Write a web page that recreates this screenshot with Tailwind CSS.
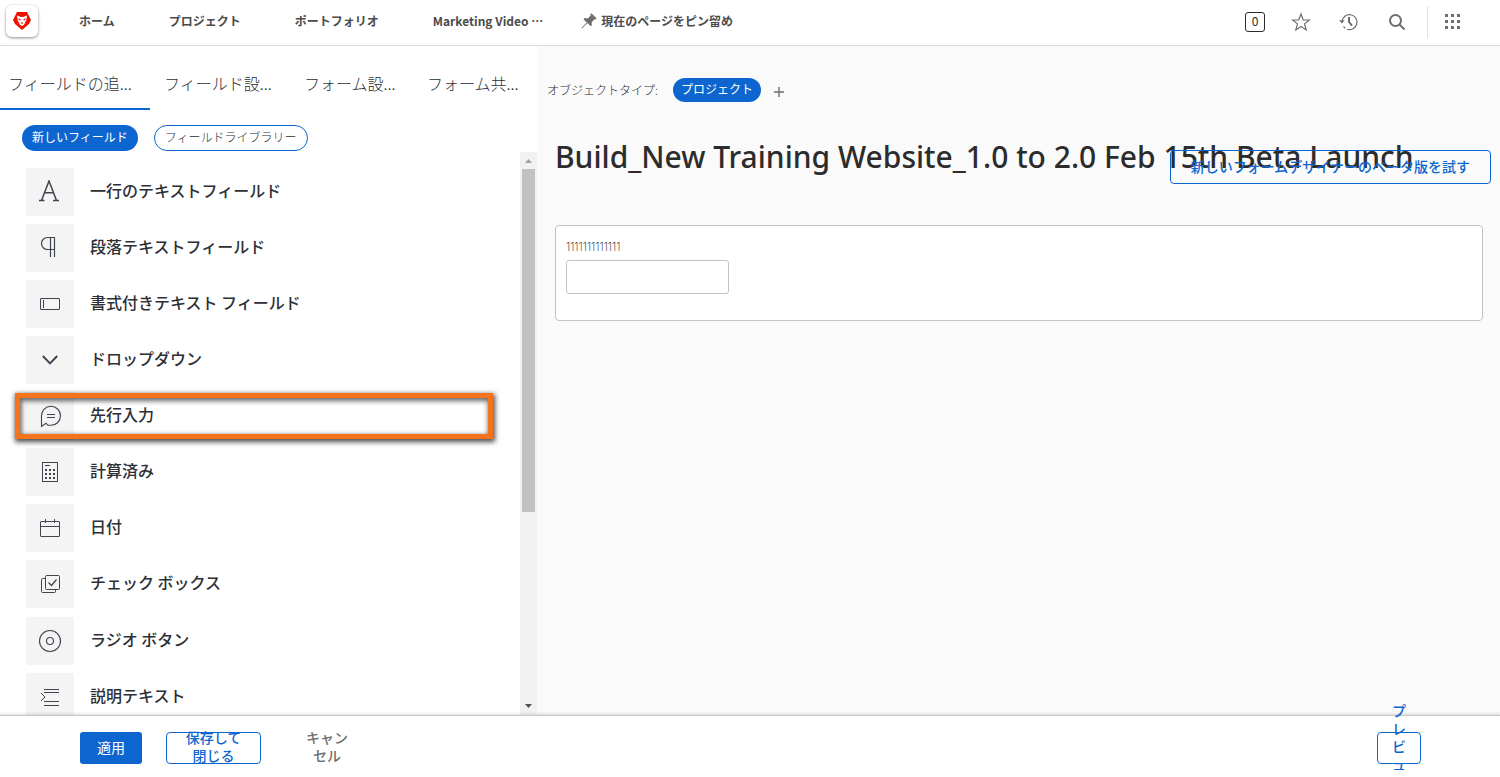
<!DOCTYPE html>
<html lang="ja">
<head>
<meta charset="utf-8">
<title>フォームデザイナー</title>
<script src="https://cdn.jsdelivr.net/npm/@tailwindcss/browser@4"></script>
</head>
<body class="bg-white">
<div class="flex h-screen flex-col pb-[7px] font-['Noto_Sans_CJK_JP','Noto_Sans',sans-serif] text-[#2c2f36]">
<div class="flex min-h-0 flex-1 flex-col overflow-hidden">

  <header class="flex h-[46px] shrink-0 items-center border-b border-[#dcdcdc] bg-white pr-10 pl-[6px] text-xs font-bold text-[#4b4b4b]">
    <a href="#" aria-label="Workfront" class="mb-[3px] flex size-8 items-center justify-center rounded-md bg-white shadow-[0_1px_3px_rgba(0,0,0,0.45)]">
      <svg class="size-[18px]" viewBox="0 0 18 18"><path fill="#eb1000" d="M4 0h10l4 8-2 4-7 6-7-6-2-4z"/><path fill="#fff" d="M4 3.500 8 5h2l4-1.500-.5 3.500-.7 4-2 2L9 14l-1.800-1-2-2-.7-4z"/><path fill="#eb1000" d="m5.500 6.200 2.500 1.500-1 .8-1.500-.8zM12.500 6.200 10 7.700l1 .8 1.500-.8zM7.700 10.500h2.600L9.600 11.700H8.400zM5.200 9l1.600 3.500-.5.5-1.300-2zM12.800 9l-1.600 3.500.5.500 1.300-2z"/></svg>
    </a>
    <nav class="ml-[41px] flex items-center gap-[54px] pb-[3px]">
      <a href="#">ホーム</a>
      <a href="#">プロジェクト</a>
      <a href="#">ポートフォリオ</a>
      <a href="#">Marketing Video …</a>
    </nav>
    <button class="ml-[38px] flex items-center gap-1 pb-1">
      <svg class="size-4" viewBox="0 0 16 16" fill="#6e6e6e"><path d="M10.500.300 15.700 5.500l-1 .9-1.100-.2-3 3 .3 2.800-1.200 1.200-3.300-3.300L1 15.600.4 15l5.300-5.600L2.500 6.200 3.700 5l3 .4 3-3-.2-1.100z"/></svg>
      <span>現在のページをピン留め</span>
    </button>
    <div class="ml-auto flex items-center pb-[2px] text-[#6e6e6e]">
      <button class="flex size-5 items-center justify-center rounded-[3px] border border-[#2c2c2c] pb-px text-xs font-normal text-[#2c2c2c]">0</button>
      <button aria-label="お気に入り" class="ml-[26px]"><svg class="size-5" viewBox="0 0 20 20" fill="none" stroke="currentColor" stroke-width="1.200"><path d="m10 2 2.200 5.800 6.200.2-4.900 3.900 1.700 6L10 14.500l-5.200 3.400 1.700-6L1.600 8l6.200-.2z"/></svg></button>
      <button aria-label="履歴" class="ml-7"><svg class="size-5" viewBox="0 0 20 20" fill="none" stroke="currentColor"><path stroke-width="1.200" d="M3 9.500A7.500 7.500 0 1 1 8 17.200M4.500 14.500l1.800 1.800"/><path fill="currentColor" stroke="none" d="M.2 8.200h5.400L2.900 11.500z"/><path stroke-width="2" d="M10 5v5l3 3.600"/></svg></button>
      <button aria-label="検索" class="ml-7"><svg class="size-5" viewBox="0 0 20 20" fill="none" stroke="currentColor" stroke-width="2"><circle cx="8.500" cy="8.500" r="5.500"/><path d="m12.500 12.500 5 5"/></svg></button>
      <span class="ml-5 h-8 w-px bg-[#e4e4e4]"></span>
      <button aria-label="アプリ" class="ml-[17px]"><svg class="size-[15px]" viewBox="0 0 15 15" fill="currentColor"><path d="M0 0h3v3H0zM6 0h3v3H6zM12 0h3v3h-3zM0 6h3v3H0zM6 6h3v3H6zM12 6h3v3h-3zM0 12h3v3H0zM6 12h3v3H6zM12 12h3v3h-3z"/></svg></button>
    </div>
  </header>

  <main class="flex min-h-0 flex-1">
    <section class="flex w-[537px] shrink-0 flex-col bg-white">
      <nav class="flex h-16 shrink-0 text-base leading-6 font-extralight whitespace-nowrap">
        <a href="#" class="w-[150px] border-b-2 border-[#0d66d0] pt-[25px] pl-2">フィールドの追...</a>
        <a href="#" class="w-[140px] pt-[25px] pl-[14px]">フィールド設...</a>
        <a href="#" class="w-[123px] pt-[25px] pl-[14px]">フォーム設...</a>
        <a href="#" class="pt-[25px] pl-[14px]">フォーム共...</a>
      </nav>
      <div class="flex shrink-0 gap-4 pt-[15px] pl-[22px] text-xs">
        <button class="h-[26px] rounded-full bg-[#0d66d0] px-[10px] pb-[2px] font-normal text-white">新しいフィールド</button>
        <button class="h-[26px] rounded-full border border-[#0d66d0] px-[10px] pb-[2px] font-extralight">フィールドライブラリー</button>
      </div>
      <div class="mt-px flex min-h-0 flex-1">
        <ul class="flex flex-1 flex-col gap-2 overflow-y-auto pt-4 pl-[26px] text-base font-medium [scrollbar-width:none]">
          <li class="flex h-12 shrink-0 gap-4">
            <span class="flex size-12 items-center justify-center rounded-[2px] bg-[#f4f4f4]"><svg class="size-6" viewBox="0 0 24 24" fill="none" stroke="#3e4450" stroke-width="1.500"><path d="M3.500 20.500 11 1l7.500 19.500M6 12.800h10M1 20.600h5.500M15 20.600h6"/></svg></span>
            <span class="self-center pb-[5px]">一行のテキストフィールド</span>
          </li>
          <li class="flex h-12 shrink-0 gap-4">
            <span class="flex size-12 items-center justify-center rounded-[2px] bg-[#f4f4f4]"><svg class="size-6" viewBox="0 0 24 24" fill="none" stroke="#3e4450" stroke-width="1.200"><path d="M17 1.500H9.500a6 6 0 0 0 0 12h3M12.500 1.500v19.500M16.500 1.500v19.500M12.500 13.500h4"/></svg></span>
            <span class="self-center pb-[5px]">段落テキストフィールド</span>
          </li>
          <li class="flex h-12 shrink-0 gap-4">
            <span class="flex size-12 items-center justify-center rounded-[2px] bg-[#f4f4f4]"><svg class="size-6" viewBox="0 0 24 24" fill="none" stroke="#3e4450"><rect x="2.500" y="6.500" width="19" height="11" rx=".5"/><path d="M5.500 8v8"/></svg></span>
            <span class="self-center pb-[5px]">書式付きテキスト フィールド</span>
          </li>
          <li class="flex h-12 shrink-0 gap-4">
            <span class="flex size-12 items-center justify-center rounded-[2px] bg-[#f4f4f4]"><svg class="size-6" viewBox="0 0 24 24" fill="none" stroke="#3e4450" stroke-width="1.900"><path d="m4.800 8 7.200 7.500L19.200 8"/></svg></span>
            <span class="self-center pb-[5px]">ドロップダウン</span>
          </li>
          <li class="relative flex h-12 shrink-0 gap-4">
            <span class="flex size-12 items-center justify-center rounded-[2px] bg-[#f4f4f4]"><svg class="size-6" viewBox="0 0 24 24" fill="none" stroke="#3e4450" stroke-width="1.100"><path d="M3.500 22.500V12A9.500 9.500 0 1 1 13 21.300H9.800L8 19.200zM9 10.500h8M9 13.500h8"/></svg></span>
            <span class="self-center pb-[5px]">先行入力</span>
            <span class="absolute top-px right-[27px] -left-[11px] h-[46px] border-[5px] border-[#f4731c] shadow-[1px_2px_5px_1px_rgba(0,0,0,0.7),inset_1px_2px_5px_1px_rgba(0,0,0,0.6)]"></span>
          </li>
          <li class="flex h-12 shrink-0 gap-4">
            <span class="flex size-12 items-center justify-center rounded-[2px] bg-[#f4f4f4]"><svg class="size-6" viewBox="0 0 24 24" fill="none" stroke="#3e4450"><rect x="4.500" y="2.500" width="15" height="19"/><path d="M7 5.500h5"/><path stroke-width="2" stroke-dasharray="2 2" d="M7 10h10M7 14h10M7 18h10"/></svg></span>
            <span class="self-center pb-[5px]">計算済み</span>
          </li>
          <li class="flex h-12 shrink-0 gap-4">
            <span class="flex size-12 items-center justify-center rounded-[2px] bg-[#f4f4f4]"><svg class="size-6" viewBox="0 0 24 24" fill="none" stroke="#3e4450"><rect x="2.500" y="5.500" width="19" height="15" rx=".5"/><path d="M2.500 10.500h19M7.500 3v4M16.500 3v4"/></svg></span>
            <span class="self-center pb-[5px]">日付</span>
          </li>
          <li class="flex h-12 shrink-0 gap-4">
            <span class="flex size-12 items-center justify-center rounded-[2px] bg-[#f4f4f4]"><svg class="size-6" viewBox="0 0 24 24" fill="none" stroke="#3e4450"><rect x="7.500" y="3.500" width="14" height="14" rx="1"/><path d="M7.500 6.500h-3a1 1 0 0 0-1 1v12a1 1 0 0 0 1 1h12a1 1 0 0 0 1-1v-2"/><path stroke-width="1.200" d="m10.500 10.500 3 3 5-6"/></svg></span>
            <span class="self-center pb-[5px]">チェック ボックス</span>
          </li>
          <li class="mt-px flex h-12 shrink-0 gap-4">
            <span class="flex size-12 items-center justify-center rounded-[2px] bg-[#f4f4f4]"><svg class="size-6" viewBox="0 0 24 24" fill="none" stroke="#3e4450" stroke-width="1.100"><circle cx="12" cy="12" r="10.500"/><circle cx="12" cy="12" r="3.500"/></svg></span>
            <span class="self-center pb-[5px]">ラジオ ボタン</span>
          </li>
          <li class="flex h-12 shrink-0 gap-4">
            <span class="flex size-12 items-center justify-center rounded-[2px] bg-[#f4f4f4]"><svg class="size-6" viewBox="0 0 24 24" fill="none" stroke="#3e4450"><path d="M6 4.500h15M6 7.500h15M6 16.500h15M6 20.500h15M3 8l4 4-4 4"/></svg></span>
            <span class="self-center pb-[5px]">説明テキスト</span>
          </li>
        </ul>
        <div class="flex w-[17px] flex-col items-center bg-[#f1f1f1]">
          <svg class="h-[17px] w-[17px] shrink-0" viewBox="0 0 17 17"><path fill="#a3a3a3" d="M5 11h7L8.500 7z"/></svg>
          <div class="h-[61%] w-[13px] bg-[#c1c1c1]"></div>
          <svg class="mt-auto h-[17px] w-[17px] shrink-0" viewBox="0 0 17 17"><path fill="#505050" d="M5 6h7l-3.500 4z"/></svg>
        </div>
      </div>
    </section>

    <section class="relative min-w-0 flex-1 bg-[#fafafa] pr-[17px]">
      <div class="flex items-center pt-8 pl-[10px] text-xs">
        <span class="font-extralight">オブジェクトタイプ:</span>
        <span class="ml-[15px] flex h-6 items-center rounded-full bg-[#0d66d0] px-2 pb-[2px] font-normal text-white">プロジェクト</span>
        <button aria-label="追加" class="mt-1 ml-[13px]"><svg class="size-[10px]" viewBox="0 0 10 10" stroke="#6e6e6e" stroke-width="1.400"><path d="M5 0v10M0 5h10"/></svg></button>
      </div>
      <h1 class="mt-[35px] pl-[18px] font-['Noto_Sans',sans-serif] text-[30px] leading-10 font-medium whitespace-nowrap text-[#2c2c2c]">Build_New Training Website_1.0 to 2.0 Feb 15th Beta Launch</h1>
      <button class="absolute top-[104px] right-[9px] h-[34px] rounded border border-[#0d66d0] px-5 pb-[2px] text-sm font-medium text-[#0d66d0]">新しいフォームデザイナーのベータ版を試す</button>
      <div class="mt-12 ml-[18px] flex h-24 flex-col items-start rounded border border-[#c3c3c7] bg-white px-[10px] pt-[13px]">
        <label for="field" class="font-[Inter,sans-serif] text-[11px] leading-4 font-extralight text-black">1111111111111</label>
        <input id="field" type="text" class="mt-[5px] h-[34px] w-[163px] rounded-[3px] border border-[#c3c3c7] bg-white px-2 text-sm">
      </div>
    </section>
  </main>

  <footer class="relative flex h-[55px] shrink-0 items-start border-t border-[#c8c8c8] bg-white pt-4 pr-[79px] pl-20 text-sm leading-[18px] font-medium shadow-[0_-1px_3px_rgba(0,0,0,0.15)]">
    <button class="flex h-8 w-[62px] items-center justify-center rounded-[3px] bg-[#0d66d0] pb-[3px] font-normal text-white">適用</button>
    <button class="ml-6 flex h-8 w-[95px] items-center justify-center rounded border border-[#0d66d0] px-[18px] pb-[5px] text-[#0d66d0]">保存して<br>閉じる</button>
    <button class="ml-[45px] flex h-8 items-center justify-center pb-[5px] text-[#6e6e6e]">キャン<br>セル</button>
    <button class="ml-auto flex h-8 w-11 items-center justify-center rounded border border-[#0d66d0] px-[14px] pb-[5px] [line-break:anywhere] text-[#0d66d0]">プレビュー</button>
  </footer>
</div>
</div>
</body>
</html>
